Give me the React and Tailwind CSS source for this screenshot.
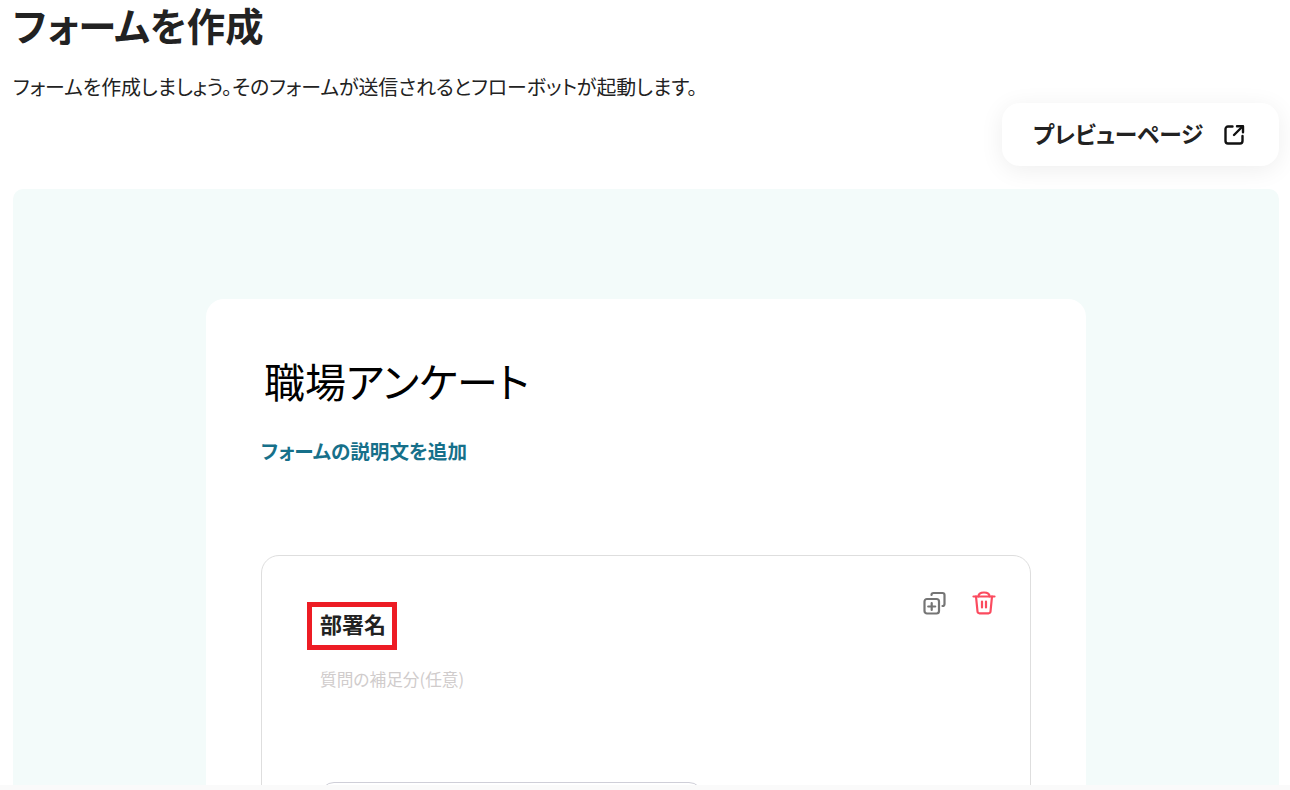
const font = { fontFamily: '"Noto Sans CJK JP", "Noto Sans", sans-serif' };

function ExternalIcon() {
  return (
    <svg width="22" height="22" viewBox="0 0 22 22" fill="none" stroke="#111" strokeWidth="2.4" strokeLinecap="round" strokeLinejoin="round">
      <path d="M9.500 2.500H5a2.500 2.500 0 0 0-2.500 2.500v12A2.500 2.500 0 0 0 5 19.500h12a2.500 2.500 0 0 0 2.500-2.500v-5" />
      <path d="M14 2.200h6v6" />
      <path d="M19.500 2.500l-8.500 8.500" />
    </svg>
  );
}

function CopyIcon() {
  return (
    <svg width="24" height="24" viewBox="0 0 24 24" fill="none" stroke="#757575" strokeWidth="2.200" strokeLinecap="round" strokeLinejoin="round">
      <path d="M8.500 4a2 2 0 0 1 2-2h9a2 2 0 0 1 2 2v9a2 2 0 0 1-2 2" />
      <rect x="1.500" y="8" width="14.500" height="14.500" rx="2.500" />
      <path d="M8.700 12v7M5.200 15.500h7" />
    </svg>
  );
}

function TrashIcon() {
  return (
    <svg width="24" height="24" viewBox="0 0 24 24" fill="none" stroke="#fb4b5f" strokeWidth="2.200" strokeLinecap="round" strokeLinejoin="round">
      <path d="M1.500 5.500h21" />
      <path d="M6.500 5.500c0-2.500 2-4 5.500-4s5.500 1.500 5.500 4" />
      <path d="M4 5.500l1.500 15a2 2 0 0 0 2 1.800h9a2 2 0 0 0 2-1.800l1.500-15" />
      <path d="M10 10.500v6M14 10.500v6" />
    </svg>
  );
}

export default function App() {
  return (
    <div className="relative h-[790px] w-[1290px] overflow-hidden bg-white text-[#222222] [font-feature-settings:'palt']" style={font}>
      <div className="pl-[13px] pr-[11px]">
        <h1 className="text-[38.4px] leading-[48px] font-bold">フォームを作成</h1>
        <p className="mt-[25px] text-[19.9px] leading-[27px]">
          フォームを作成しましょう。そのフォームが送信されるとフローボットが起動します。
        </p>
        <div className="mt-[3px] flex justify-end">
          <button className="flex h-[63px] w-[277px] items-center rounded-[18px] bg-white pl-[31px] text-[22.7px] font-bold shadow-[0_4px_24px_rgba(0,0,0,0.07)]">
            <span className="whitespace-nowrap">プレビューページ</span>
            <span className="ml-[20px]"><ExternalIcon /></span>
          </button>
        </div>
        <div className="mt-[23px] flex h-[700px] justify-center rounded-[10px] bg-[#f3fbfa] pt-[110px]">
          <div className="h-[600px] w-[880px] rounded-[18px] bg-white px-[55px] pt-[51px]">
            <div className="pl-[3px] text-[41px] leading-[60px] text-black">職場アンケート</div>
            <div className="mt-[27px] text-[19.6px] leading-[27px] font-bold text-[#16708a]">フォームの説明文を追加</div>
            <div className="relative mt-[91px] h-[400px] rounded-[18px] border border-[#dedede] pl-[45px] pt-[46px]">
              <div className="inline-block border-[5px] border-[#ed1c24] pl-[8px] pr-[6px] pb-[6px] text-[22px] leading-[32px] font-bold">部署名</div>
              <div className="mt-[17px] pl-[13px] text-[16.7px] leading-[24px] text-[#d0cccc]">質問の補足分(任意)</div>
              <div className="mt-[91px] ml-[13px] h-[60px] w-[383px] rounded-[14px] border border-[#cfcfd8]"></div>
              <div className="absolute right-[34px] top-[35px] flex gap-[25px]">
                <CopyIcon />
                <TrashIcon />
              </div>
            </div>
          </div>
        </div>
      </div>
      <div className="absolute bottom-0 left-0 h-[5px] w-full bg-[#fafafa]"></div>
    </div>
  );
}
